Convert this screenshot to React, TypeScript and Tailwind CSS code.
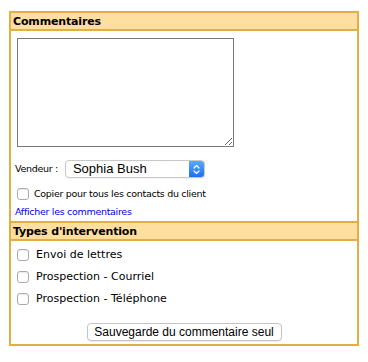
import React from 'react';

const Checkbox: React.FC = () => (
  <span className="inline-block w-[12px] h-[12px] rounded-[3px] border border-[#ababab] bg-white shadow-[inset_0_1px_1px_rgba(0,0,0,0.08)] shrink-0" />
);

const interventions = ['Envoi de lettres', 'Prospection - Courriel', 'Prospection - Téléphone'];

const App: React.FC = () => {
  return (
    <div className="w-[368px] h-[362px] bg-white pt-[11px] pl-[9px]" style={{ fontFamily: '"DejaVu Sans", Verdana, sans-serif' }}>
      <div className="w-[350px] h-[335px] border-2 border-[#e2ae45] flex flex-col">
        <div className="h-[18px] shrink-0 bg-[#ffdf9f] border-b-2 border-[#e2ae45] pl-[2px] pt-[1px] flex items-center text-[11px] font-bold tracking-[-0.15px] leading-none">
          Commentaires
        </div>

        <div className="h-[190px] shrink-0 pl-[4px] pt-[7px]">
          <textarea className="block ml-[2px] w-[217px] h-[109px] border border-[#7a7a7a] bg-white resize" />

          <div className="mt-[13px] flex items-center h-[18px]">
            <span className="text-[9.5px] tracking-[-0.3px] text-black mr-[7px]">Vendeur :</span>
            <div className="w-[140px] h-[18px] flex rounded-[4px] border border-[#c8c8c8] overflow-hidden bg-white shadow-[0_1px_1px_rgba(0,0,0,0.05)]">
              <span className="flex-1 pl-[7px] flex items-center text-[13px] text-black" style={{ fontFamily: '"Liberation Sans", Arial, sans-serif' }}>
                Sophia Bush
              </span>
              <span className="w-[15px] bg-gradient-to-b from-[#5aa9ff] to-[#1a6ff0] flex items-center justify-center">
                <svg width="7" height="11" viewBox="0 0 7 11" fill="none" stroke="white" strokeWidth="1.2" strokeLinecap="round" strokeLinejoin="round">
                  <path d="M1 4 L3.5 1.5 L6 4" />
                  <path d="M1 7 L3.5 9.5 L6 7" />
                </svg>
              </span>
            </div>
          </div>

          <div className="mt-[10px] flex items-center ml-[2px] h-[12px]">
            <Checkbox />
            <span className="ml-[5px] text-[9.5px] tracking-[-0.3px] text-black">Copier pour tous les contacts du client</span>
          </div>

          <div className="mt-[6px] text-[9.5px] tracking-[-0.3px] text-[#0000ee] leading-[12px]">Afficher les commentaires</div>
        </div>

        <div className="h-[20px] shrink-0 bg-[#ffdf9f] border-y-2 border-[#e2ae45] pl-[2px] pt-[1px] flex items-center text-[11px] font-bold tracking-[-0.15px] leading-none">
          Types d'intervention
        </div>

        <div className="flex-1 pt-[3px] flex flex-col">
          {interventions.map((label) => (
            <div key={label} className="h-[22px] shrink-0 flex items-center pl-[6px]">
              <Checkbox />
              <span className="ml-[7px] text-[11px] text-black">{label}</span>
            </div>
          ))}
          <div className="mt-[13px] flex justify-center">
            <button
              className="h-[18px] w-[195px] rounded-[4px] border border-[#c4c4c4] bg-white text-[12px] text-black leading-none shadow-[0_1px_1px_rgba(0,0,0,0.08)]"
              style={{ fontFamily: '"Liberation Sans", Arial, sans-serif' }}
            >
              Sauvegarde du commentaire seul
            </button>
          </div>
        </div>
      </div>
    </div>
  );
};

export default App;
